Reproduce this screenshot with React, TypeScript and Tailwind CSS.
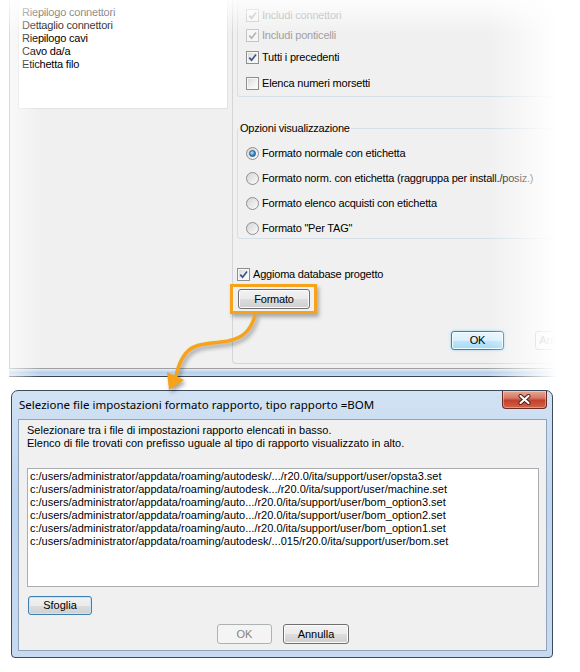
import React from 'react';

type Variant = 'normal' | 'hot' | 'default' | 'disabled';

const BUTTON_STYLE: Record<Variant, string> = {
  normal:
    'border-[#707070] bg-[linear-gradient(to_bottom,#f2f2f2_0%,#ebebeb_50%,#dddddd_51%,#cfcfcf_100%)] shadow-[inset_0_0_0_1px_#fbfbfb] text-black',
  hot: 'border-[#3c7fb1] bg-[linear-gradient(to_bottom,#eaf6fd_0%,#d9f0fc_50%,#bee6fd_51%,#a7d9f5_100%)] shadow-[inset_0_0_0_1px_#f4fbfe,0_0_3px_#8fd0f5] text-black',
  default:
    'border-[#3c7fb1] bg-[linear-gradient(to_bottom,#f2f2f2_0%,#ebebeb_50%,#dddddd_51%,#cfcfcf_100%)] shadow-[inset_0_0_0_1px_#c4e8fb] text-black',
  disabled: 'border-[#adb2b5] bg-[#f4f4f4] text-[#838383]',
};

function WinButton({
  label,
  variant = 'normal',
  className = '',
}: {
  label: string;
  variant?: Variant;
  className?: string;
}) {
  return (
    <button
      type="button"
      className={`flex shrink-0 items-center justify-center rounded-[3px] border leading-none ${BUTTON_STYLE[variant]} ${className}`}
    >
      {label}
    </button>
  );
}

function CheckBox({ checked, disabled }: { checked?: boolean; disabled?: boolean }) {
  return (
    <span
      className={`flex h-[13px] w-[13px] shrink-0 items-center justify-center border ${
        disabled
          ? 'border-[#c4c4c4] bg-[#f6f6f6]'
          : 'border-[#8e8f8f] bg-[linear-gradient(135deg,#d6d6d6,#f3f3f3_60%,#ffffff)] shadow-[inset_0_0_0_1px_#f7f7f7]'
      }`}
    >
      {checked && (
        <svg width="9" height="9" viewBox="0 0 9 9">
          <path
            d="M1.2 4.6 L3.6 7.2 L8 1.4"
            fill="none"
            stroke={disabled ? '#b4b4b4' : '#3d5389'}
            strokeWidth="1.7"
          />
        </svg>
      )}
    </span>
  );
}

function Radio({ on }: { on?: boolean }) {
  return (
    <span className="flex h-[13px] w-[13px] shrink-0 items-center justify-center rounded-full border border-[#8e8f8f] bg-[linear-gradient(135deg,#d4d4d4,#fbfbfb)]">
      {on && (
        <span className="h-[7px] w-[7px] rounded-full border border-[#1e4f7e] bg-[radial-gradient(circle_at_35%_30%,#c2e6fc,#3c93d6_55%,#1b5c9a)]" />
      )}
    </span>
  );
}

const REPORTS = [
  'Riepilogo connettori',
  'Dettaglio connettori',
  'Riepilogo cavi',
  'Cavo da/a',
  'Etichetta filo',
];

const OPTIONS = [
  'Formato normale con etichetta',
  'Formato norm. con etichetta (raggruppa per install./posiz.)',
  'Formato elenco acquisti con etichetta',
  'Formato "Per TAG"',
];

const FILES = [
  'c:/users/administrator/appdata/roaming/autodesk/.../r20.0/ita/support/user/opsta3.set',
  'c:/users/administrator/appdata/roaming/autodesk.../r20.0/ita/support/user/machine.set',
  'c:/users/administrator/appdata/roaming/auto.../r20.0/ita/support/user/bom_option3.set',
  'c:/users/administrator/appdata/roaming/auto.../r20.0/ita/support/user/bom_option2.set',
  'c:/users/administrator/appdata/roaming/auto.../r20.0/ita/support/user/bom_option1.set',
  'c:/users/administrator/appdata/roaming/autodesk/...015/r20.0/ita/support/user/bom.set',
];

function ReportDialog() {
  return (
    <div className="relative h-[377px] overflow-hidden tracking-[-0.2px]">
      <div className="ml-[9px] flex h-full w-[620px] flex-col">
        <div className="flex flex-1 border-b border-l border-[#a0a0a0] bg-[#f0f0f0]">
          <div className="w-[222px] shrink-0 pl-[8px]">
            <div className="h-[109px] w-[210px] border-b border-l border-r border-[#e2e2e2] bg-white pl-[3px] pt-[6px] leading-[13px]">
              {REPORTS.map((r) => (
                <div key={r}>{r}</div>
              ))}
            </div>
          </div>

          <div className="flex h-[364px] flex-1 flex-col rounded-bl-[4px] border-b border-l border-[#d2d6da] pl-[4px]">
            <div className="rounded-b-[3px] border-b border-l border-r border-[#d5dfe5] pb-[3px] pl-[8px] pt-[5px]">
              <div className="flex h-[20px] items-center gap-[3px] text-[#a0a0a0]">
                <CheckBox checked disabled />
                <span>Includi connettori</span>
              </div>
              <div className="flex h-[20px] items-center gap-[3px] text-[#a0a0a0]">
                <CheckBox checked disabled />
                <span>Includi ponticelli</span>
              </div>
              <div className="mt-[2px] flex h-[20px] items-center gap-[3px]">
                <CheckBox checked />
                <span>Tutti i precedenti</span>
              </div>
              <div className="mt-[6px] flex h-[20px] items-center gap-[3px]">
                <CheckBox />
                <span>Elenca numeri morsetti</span>
              </div>
            </div>

            <div className="relative mt-[31px] rounded-[3px] border border-[#d5dfe5] pb-[1px] pl-[8px] pt-[15px]">
              <span className="absolute left-[1px] top-[-7px] bg-[#f0f0f0] px-[1px] leading-[13px]">
                Opzioni visualizzazione
              </span>
              <div className="flex flex-col gap-[7px]">
                {OPTIONS.map((o, i) => (
                  <div key={o} className="flex h-[18px] items-center gap-[3px]">
                    <Radio on={i === 0} />
                    <span>{o}</span>
                  </div>
                ))}
              </div>
            </div>

            <div className="mt-[26px] flex h-[18px] items-center gap-[3px]">
              <CheckBox checked />
              <span>Aggioma database progetto</span>
            </div>

            <WinButton label="Formato" className="ml-[1px] mt-[6px] h-[20px] w-[72px]" />

            <div className="ml-[214px] mt-[22px] flex gap-[31px]">
              <WinButton label="OK" variant="hot" className="h-[19px] w-[53px]" />
              <WinButton label="Annulla" variant="disabled" className="h-[19px] w-[44px]" />
            </div>
          </div>
        </div>
        <div className="h-[7px] bg-[linear-gradient(to_bottom,#e4eef8,#b6cfea_50%,#cadcf0)]" />
        <div className="h-px bg-[#3b4350]" />
      </div>

      <div className="pointer-events-none absolute inset-x-0 top-0 h-[34px] bg-gradient-to-b from-white/85 to-white/0" />
      <div className="pointer-events-none absolute left-0 top-0 h-full w-[40px] bg-gradient-to-r from-white/80 to-white/0" />
      <div className="pointer-events-none absolute right-0 top-0 h-full w-[92px] bg-[linear-gradient(to_right,rgba(255,255,255,0),#ffffff_75%)]" />
    </div>
  );
}

function FileDialog() {
  return (
    <div className="ml-[11px] mt-[13px] flex h-[268px] w-[542px] flex-col rounded-b-[4px] rounded-t-[7px] border border-[#3c4a5c] bg-[linear-gradient(to_bottom,#d2e2f4,#c0d5ee_40%,#c7daf0)] pb-[6px] pl-[6px] pr-[5px]">
      <div className="flex h-[28px] shrink-0 justify-between pl-[1px]">
        <span className="self-center font-['Noto_Sans',sans-serif] text-[11.5px] text-black">
          Selezione file impostazioni formato rapporto, tipo rapporto =BOM
        </span>
        <span className="flex h-[18px] w-[45px] items-center justify-center rounded-b-[4px] border border-t-0 border-[#6b2a22] bg-[linear-gradient(to_bottom,#e9a896,#d77a64_40%,#c3412b_55%,#cf6448)] shadow-[inset_0_0_0_1px_rgba(255,255,255,0.35)]">
          <svg width="13" height="11" viewBox="0 0 13 11">
            <path d="M2.5 2 L10.5 9 M10.5 2 L2.5 9" stroke="#4a1a14" strokeWidth="4" strokeLinecap="round" />
            <path d="M2.5 2 L10.5 9 M10.5 2 L2.5 9" stroke="#ffffff" strokeWidth="2.2" strokeLinecap="round" />
          </svg>
        </span>
      </div>

      <div className="flex h-[232px] flex-col border border-[#8fa3ba] bg-[#f0f0f0] pl-[8px] pt-[4px] leading-[13px]">
        <div>Selezionare tra i file di impostazioni rapporto elencati in basso.</div>
        <div>Elenco di file trovati con prefisso uguale al tipo di rapporto visualizzato in alto.</div>

        <div className="mt-[18px] h-[119px] w-[512px] border border-[#abadb3] bg-white pl-[2px] pt-[1px]">
          {FILES.map((f) => (
            <div key={f} className="whitespace-nowrap">
              {f}
            </div>
          ))}
        </div>

        <WinButton label="Sfoglia" variant="default" className="ml-[1px] mt-[9px] h-[19px] w-[64px]" />

        <div className="ml-[190px] mt-[9px] flex gap-[11px]">
          <WinButton label="OK" variant="disabled" className="h-[20px] w-[55px]" />
          <WinButton label="Annulla" className="h-[20px] w-[66px]" />
        </div>
      </div>
    </div>
  );
}

export default function App() {
  return (
    <div className="relative h-[672px] w-[580px] overflow-hidden bg-white font-['Liberation_Sans',Arial,sans-serif] text-[11px] text-black">
      <ReportDialog />
      <FileDialog />

      {/* callout: highlight round "Formato" and arrow to the dialog it opens */}
      <div className="pointer-events-none absolute left-[230px] top-[284px] h-[30px] w-[87px] border-[3px] border-[#f7a21b] shadow-[2px_3px_4px_rgba(0,0,0,0.3)]" />
      <svg
        className="pointer-events-none absolute left-0 top-0 drop-shadow-[2px_3px_2px_rgba(0,0,0,0.35)]"
        width="580"
        height="672"
        viewBox="0 0 580 672"
      >
        <path
          d="M255 316 C250 331 243 338 228 341 C211 344 195 342 186 353 C180 360 178 367 176 376"
          fill="none"
          stroke="#f7a21b"
          strokeWidth="3.5"
          strokeLinecap="round"
        />
        <polygon points="167,372 184,380 169,390" fill="#f7a21b" />
      </svg>
    </div>
  );
}
